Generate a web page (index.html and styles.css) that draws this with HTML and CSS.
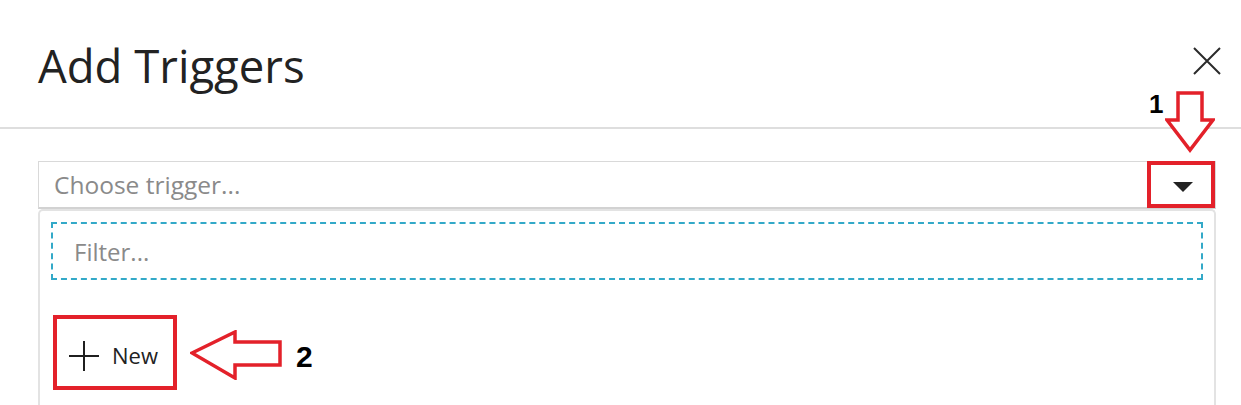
FILE: index.html
```html
<!DOCTYPE html>
<html lang="en">
<head>
<meta charset="utf-8">
<title>Add Triggers</title>
<link rel="stylesheet" href="styles.css">
</head>
<body>
<div class="dialog">
  <header class="head">
    <h1 class="title">Add Triggers</h1>
    <button class="close" aria-label="Close">
      <svg width="28" height="28" viewBox="0 0 28 28"><path d="M1 1 L27 27 M27 1 L1 27" stroke="#2b2b2b" stroke-width="2" fill="none"/></svg>
    </button>
  </header>
  <div class="content">
    <div class="select">
      <span class="placeholder">Choose trigger...</span>
      <span class="caret"></span>
    </div>
    <div class="panel">
      <div class="filter">Filter...</div>
      <div class="list">
        <div class="new-item">
          <svg class="plus" width="30" height="30" viewBox="0 0 30 30"><path d="M0 15 H30 M15 0 V30" stroke="#1f1f1f" stroke-width="2" fill="none"/></svg>
          <span class="new-label">New</span>
        </div>
      </div>
    </div>
  </div>

  <div class="anno box1"></div>
  <svg class="anno arrow1" width="50" height="62" viewBox="0 0 50 62"><path d="M13 2 H37 V29 H48 L25 59 L2 29 H13 Z" fill="#fff" stroke="#e3212a" stroke-width="3.5" stroke-linejoin="miter"/></svg>
  <span class="anno num num1">1</span>

  <div class="anno box2"></div>
  <svg class="anno arrow2" width="92" height="50" viewBox="0 0 92 50"><path d="M2 23 L45 2 V12 H90 V35 H45 V48 Z" fill="#fff" stroke="#e3212a" stroke-width="3.5"/></svg>
  <span class="anno num num2">2</span>
</div>
</body>
</html>
```
FILE: styles.css
```css
* { box-sizing: border-box; }
html, body { margin: 0; padding: 0; background: #fff; }
body {
  font-family: "Open Sans", "Noto Sans", "Liberation Sans", sans-serif;
  color: #252525;
  width: 1241px;
  height: 405px;
  overflow: hidden;
}
.dialog { position: relative; height: 405px; }

.head {
  height: 129px;
  padding: 35px 20px 0 38px;
  border-bottom: 2px solid #dedede;
  display: flex;
  align-items: flex-start;
  justify-content: space-between;
}
.title {
  margin: 0;
  font-size: 45.5px;
  font-weight: 400;
  line-height: 61px;
  color: #222;
}
.close {
  border: 0;
  background: none;
  padding: 0;
  margin-top: 12px;
  width: 28px;
  height: 28px;
  display: block;
}
.close svg { display: block; }

.content { padding: 32px 25px 0 38px; }

.select {
  height: 48px;
  border: 1px solid #d9d9d9;
  border-bottom: 2px solid #d2d2d2;
  display: flex;
  align-items: center;
  padding: 0 22px 0 15px;
}
.placeholder {
  font-size: 24.5px;
  color: #8a8a8a;
  line-height: 44px;
  flex: 1;
}
.caret {
  width: 0;
  height: 0;
  border-left: 10px solid transparent;
  border-right: 10px solid transparent;
  border-top: 10px solid #222;
  margin-top: 4px;
}

.panel {
  height: 200px;
  border: 2px solid #e3e3e3;
  border-bottom: 0;
  border-radius: 5px 5px 0 0;
  padding: 11px 11px 0 11px;
}
.filter {
  height: 58px;
  border: 2px dashed #33a9c8;
  padding-left: 21px;
  font-size: 24px;
  line-height: 56px;
  color: #8a8a8a;
}
.list { padding: 56px 0 0 18px; }
.new-item {
  display: flex;
  align-items: center;
  gap: 13px;
  height: 40px;
}
.plus { display: block; }
.new-label {
  font-size: 22px;
  color: #222;
  line-height: 30px;
  margin-top: -3px;
}

.anno { position: absolute; }
.box1 {
  left: 1147px; top: 161px; width: 68px; height: 47px;
  border: 4px solid #e3212a;
}
.arrow1 { left: 1165px; top: 91px; }
.num {
  font-family: "Liberation Sans", Arial, sans-serif;
  font-weight: 700;
  color: #000;
}
.num1 { left: 1149px; top: 91px; font-size: 26px; line-height: 26px; }
.box2 {
  left: 53px; top: 315px; width: 124px; height: 75px;
  border: 4px solid #e3212a;
}
.arrow2 { left: 190px; top: 330px; }
.num2 { left: 296px; top: 342px; font-size: 30px; line-height: 30px; }
```
